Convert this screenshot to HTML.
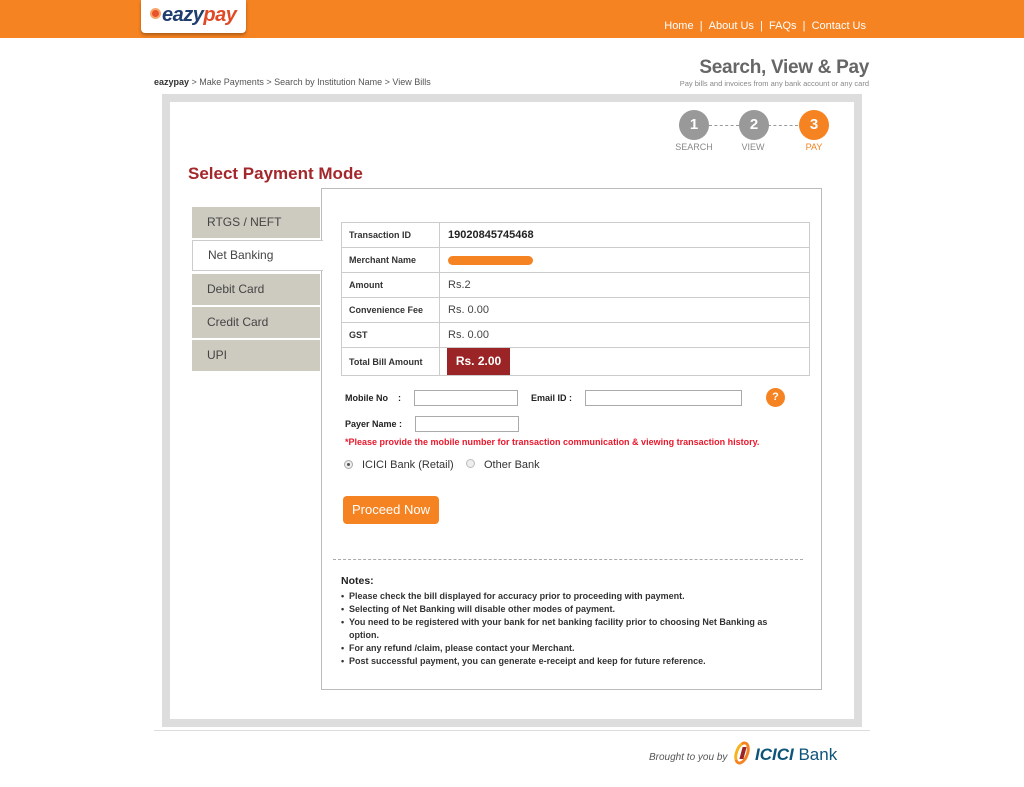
<!DOCTYPE html>
<html><head><meta charset="utf-8"><style>
*{margin:0;padding:0;box-sizing:border-box}
body{width:1024px;height:787px;position:relative;background:#fff;font-family:"Liberation Sans",Arial,sans-serif;overflow:hidden;color:#333}
.a{position:absolute;white-space:nowrap}
.hdr{left:0;top:0;width:1024px;height:38px;background:#f68321}
.logo{left:141px;top:0;width:105px;height:33px;background:#fff;border-radius:0 0 4px 4px;box-shadow:0 2px 3px rgba(0,0,0,.3)}
.nav{right:158px;top:19px;color:#fff;font-size:11px}
.frame{left:162px;top:94px;width:700px;height:633px;border:8px solid #ddd;background:#fff}
.circ{width:30px;height:30px;border-radius:50%;color:#fff;font-weight:bold;font-size:15px;text-align:center;line-height:30px}
.lbl{font-size:9px;color:#888;width:60px;text-align:center}
.tab{left:192px;width:128px;height:31px;background:#cdcac0;font-size:12px;color:#444;padding-left:15px;line-height:31px}
table{border-collapse:collapse;font-size:9px}
td{border:1px solid #ccc;height:25px;padding-left:7px;font-weight:bold;color:#333}
td.v{font-size:11px;font-weight:normal;color:#444;padding-left:8px}
.inp{height:16px;border:1px solid #aaa;background:#fff}
.fl{font-size:9px;font-weight:bold;color:#222}
ul{list-style:none}
li{font-size:9px;font-weight:bold;color:#333;line-height:13px;position:relative;padding-left:8px;width:440px;white-space:normal}
li:before{content:"•";position:absolute;left:0}
</style></head><body>
<div class="a hdr"></div>
<div class="a logo"><div class="a" style="left:9px;top:8px;width:11px;height:11px;border-radius:50%;background:#e8532b;border:2px solid #f7a76c"></div><div class="a" style="left:21px;top:4px;font-size:20px;font-weight:bold;font-style:italic;letter-spacing:-0.5px"><span style="color:#1f3e6d">eazy</span><span style="color:#e04a27">pay</span></div></div>
<div class="a nav" style="top:20px">Home &nbsp;| &nbsp;About Us &nbsp;| &nbsp;FAQs &nbsp;| &nbsp;Contact Us</div>
<div class="a" style="left:154px;top:77px;font-size:9px;color:#555"><b style="color:#333">eazypay</b> &gt; Make Payments &gt; Search by Institution Name &gt; View Bills</div>
<div class="a" style="right:155px;top:57px;font-size:19px;font-weight:bold;color:#666;letter-spacing:-0.3px">Search, View &amp; Pay</div>
<div class="a" style="right:155px;top:79px;font-size:7.5px;color:#888">Pay bills and invoices from any bank account or any card</div>
<div class="a frame"></div>
<div class="a" style="left:709px;top:125px;width:30px;border-top:1px dashed #999"></div>
<div class="a" style="left:768px;top:125px;width:30px;border-top:1px dashed #999"></div>
<div class="a circ" style="left:679px;top:110px;background:#999">1</div>
<div class="a circ" style="left:739px;top:110px;background:#999">2</div>
<div class="a circ" style="left:799px;top:110px;background:#f68321">3</div>
<div class="a lbl" style="left:664px;top:142px">SEARCH</div>
<div class="a lbl" style="left:723px;top:142px">VIEW</div>
<div class="a lbl" style="left:784px;top:142px;color:#f68321">PAY</div>
<div class="a" style="left:188px;top:164px;font-size:17px;font-weight:bold;color:#a3272b">Select Payment Mode</div>
<div class="a" style="left:321px;top:188px;width:501px;height:502px;border:1px solid #bbb"></div>
<div class="a tab" style="top:207px">RTGS / NEFT</div>
<div class="a tab" style="top:240px;background:#fff;width:131px;border:1px solid #ccc;border-right:none;line-height:29px">Net Banking</div>
<div class="a tab" style="top:274px">Debit Card</div>
<div class="a tab" style="top:307px">Credit Card</div>
<div class="a tab" style="top:340px">UPI</div>
<table class="a" style="left:341px;top:222px;width:469px">
<tr><td style="width:98px">Transaction ID</td><td class="v" style="font-weight:bold;color:#222">19020845745468</td></tr>
<tr><td>Merchant Name</td><td class="v"><div style="width:85px;height:9px;background:#f68321;border-radius:5px"></div></td></tr>
<tr><td>Amount</td><td class="v">Rs.2</td></tr>
<tr><td>Convenience Fee</td><td class="v">Rs. 0.00</td></tr>
<tr><td>GST</td><td class="v">Rs. 0.00</td></tr>
<tr><td style="height:27px">Total Bill Amount</td><td class="v" style="padding-left:7px"><div style="width:63px;height:27px;background:#9b2526;color:#fff;font-weight:bold;font-size:12px;line-height:27px;text-align:center">Rs. 2.00</div></td></tr>
</table>
<div class="a fl" style="left:345px;top:393px">Mobile No &nbsp;&nbsp;&nbsp;:</div>
<div class="a inp" style="left:414px;top:390px;width:104px"></div>
<div class="a fl" style="left:531px;top:393px">Email ID :</div>
<div class="a inp" style="left:585px;top:390px;width:157px"></div>
<div class="a" style="left:766px;top:388px;width:19px;height:19px;border-radius:50%;background:#f68321;color:#fff;font-weight:bold;font-size:11px;text-align:center;line-height:19px">?</div>
<div class="a fl" style="left:345px;top:419px">Payer Name :</div>
<div class="a inp" style="left:415px;top:416px;width:104px"></div>
<div class="a" style="left:345px;top:437px;font-size:9px;font-weight:bold;color:#e8192c">*Please provide the mobile number for transaction communication &amp; viewing transaction history.</div>
<div class="a" style="left:344px;top:460px;width:9px;height:9px;border-radius:50%;border:1px solid #aaa;background:#eee"><div style="margin:2px;width:3px;height:3px;border-radius:50%;background:#555"></div></div>
<div class="a" style="left:362px;top:459px;font-size:11px;color:#333">ICICI Bank (Retail)</div>
<div class="a" style="left:466px;top:459px;width:9px;height:9px;border-radius:50%;border:1px solid #bbb;background:#eee"></div>
<div class="a" style="left:484px;top:459px;font-size:11px;color:#333">Other Bank</div>
<div class="a" style="left:343px;top:496px;width:96px;height:28px;background:#f68321;border-radius:4px;color:#fff;font-size:13px;text-align:center;line-height:28px">Proceed Now</div>
<div class="a" style="left:333px;top:559px;width:470px;border-top:1px dashed #aaa"></div>
<div class="a" style="left:341px;top:575px;font-size:10.5px;font-weight:bold;color:#222">Notes:</div>
<ul class="a" style="left:341px;top:590px">
<li>Please check the bill displayed for accuracy prior to proceeding with payment.</li>
<li>Selecting of Net Banking will disable other modes of payment.</li>
<li>You need to be registered with your bank for net banking facility prior to choosing Net Banking as option.</li>
<li>For any refund /claim, please contact your Merchant.</li>
<li>Post successful payment, you can generate e-receipt and keep for future reference.</li>
</ul>
<div class="a" style="left:154px;top:730px;width:716px;border-top:1px solid #ddd"></div>
<div class="a" style="left:649px;top:752px;font-size:10px;font-style:italic;color:#555">Brought to you by</div>
<div class="a" style="left:735px;top:741px;width:14px;height:24px;border-radius:50%;border:3px solid #f68321;border-left-color:#f8b21e;transform:rotate(20deg)"></div>
<div class="a" style="left:741px;top:747px;width:4px;height:12px;background:#9b2526;transform:skew(-15deg)"></div>
<div class="a" style="left:755px;top:745px;font-size:17px;font-weight:bold;color:#0c5478"><i>ICICI</i> <span style="font-weight:normal">Bank</span></div>
</body></html>
